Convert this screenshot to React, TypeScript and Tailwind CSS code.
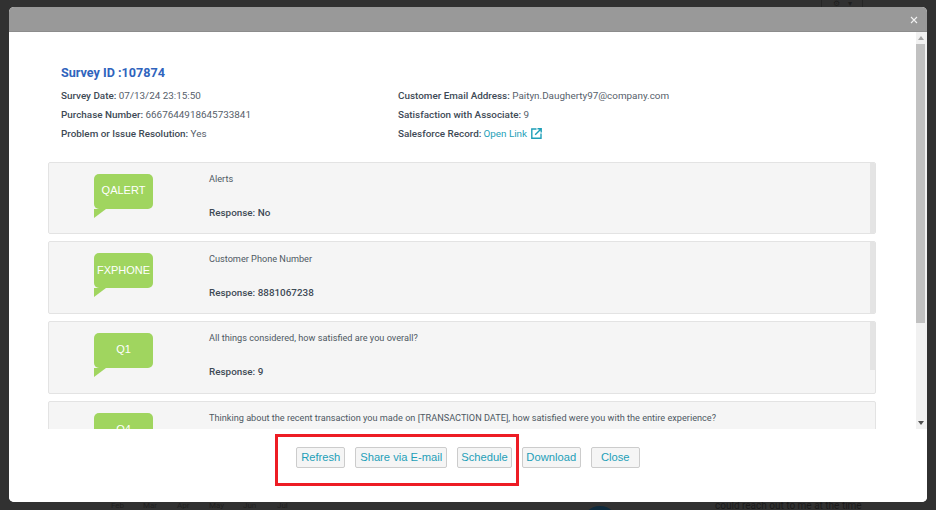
import React from 'react';

const questions = [
    { code: 'QALERT', text: 'Alerts', response: 'No', bar: 'h-full' },
    { code: 'FXPHONE', text: 'Customer Phone Number', response: '8881067238', bar: 'h-full' },
    { code: 'Q1', text: 'All things considered, how satisfied are you overall?', response: '9', bar: 'h-[48px]' },
    {
        code: 'Q4',
        text: 'Thinking about the recent transaction you made on [TRANSACTION DATE], how satisfied were you with the entire experience?',
        response: '10',
        bar: 'h-0',
    },
];

const buttons = [
    { label: 'Refresh', width: 'w-[49px]' },
    { label: 'Share via E-mail', width: 'w-[92px]' },
    { label: 'Schedule', width: 'w-[54.5px]' },
    { label: 'Download', width: 'w-[59px]' },
    { label: 'Close', width: 'w-[49px]' },
];

const months = [
    { name: 'Feb', left: 'left-[111px]' },
    { name: 'Mar', left: 'left-[143px]' },
    { name: 'Apr', left: 'left-[177px]' },
    { name: 'May', left: 'left-[209px]' },
    { name: 'Jun', left: 'left-[243px]' },
    { name: 'Jul', left: 'left-[277px]' },
];

const Bubble: React.FC<{ code: string }> = ({ code }) => (
    <div className="relative w-[59px] h-[35px] shrink-0 ml-[45px] rounded-[5px] bg-[#a0d55f] flex justify-center pt-[9.5px] text-[11px] leading-[14px] font-normal text-white font-['Liberation_Sans',sans-serif]">
        {code}
        <svg className="absolute left-0 top-[35px]" width="12" height="10" viewBox="0 0 12 10">
            <path d="M0 0H12L0 9Z" fill="#a0d55f" />
        </svg>
    </div>
);

const Meta: React.FC<{ label: string; children: React.ReactNode }> = ({ label, children }) => (
    <p className="h-[19px] leading-[19px] whitespace-nowrap">
        <span className="font-medium text-[#3e4a56]">{label}</span> <span className="text-[#56606a]">{children}</span>
    </p>
);

export default function App() {
    return (
        <div className="relative h-[510px] w-[936px] overflow-hidden bg-[#313131] font-['Roboto',sans-serif] pt-[7px] pl-[9px]">
            {/* page behind the overlay, only its edges show */}
            <div className="absolute left-[821px] top-0 w-[42px] h-[7px] border-x border-[#262626] flex justify-center gap-[8px] text-[8px] leading-[7px] text-[#1f1f1f]">
                <span>⚙</span>
                <span>▾</span>
            </div>
            {months.map((m) => (
                <span key={m.name} className={`absolute top-[502px] text-[8px] leading-[8px] text-[#1f1f1f] ${m.left}`}>
                    {m.name}
                </span>
            ))}
            <div className="absolute left-[582px] top-[506px] w-[36px] h-[36px] rounded-full bg-[#0f2a3c]" />
            <span className="absolute left-[715px] top-[500px] text-[10px] leading-[12px] whitespace-nowrap text-[#1a1a1a]">
                could reach out to me at the time
            </span>

            <div className="relative w-[918px] h-[495px] rounded-[5px] overflow-hidden bg-white flex flex-col">
                <div className="h-[25px] shrink-0 bg-[#999999] border-b border-[#8c8c8c] flex justify-end items-center pr-[9px]">
                    <svg width="8" height="8" viewBox="0 0 8 8" className="mt-[2px]">
                        <path d="M1 1L7 7M7 1L1 7" stroke="#f2f2f2" strokeWidth="1.1" />
                    </svg>
                </div>

                <div className="h-[397px] shrink-0 flex overflow-hidden">
                    <div className="w-[907px] shrink-0 overflow-hidden pl-[39px] pr-[40px]">
                        <h2 className="ml-[13px] mt-[33px] text-[12.6px] leading-[16px] font-bold text-[#2f64bd]">Survey ID :107874</h2>
                        <div className="ml-[13px] mt-[5px] grid grid-cols-[337px_1fr] text-[9.9px]">
                            <div>
                                <Meta label="Survey Date:">07/13/24 23:15:50</Meta>
                                <Meta label="Purchase Number:">6667644918645733841</Meta>
                                <Meta label="Problem or Issue Resolution:">Yes</Meta>
                            </div>
                            <div>
                                <Meta label="Customer Email Address:">Paityn.Daugherty97@company.com</Meta>
                                <Meta label="Satisfaction with Associate:">9</Meta>
                                <p className="h-[19px] leading-[19px] flex items-center whitespace-nowrap">
                                    <span className="font-medium text-[#3e4a56]">Salesforce Record:</span>
                                    <span className="ml-[2px] text-[#1e9fb8]">Open Link</span>
                                    <svg className="ml-[4px]" width="11" height="11" viewBox="0 0 11 11" fill="none" stroke="#1e9fb8" strokeWidth="1.4">
                                        <path d="M5.5 1H0.8V10.2H10V5.5" />
                                        <path d="M4.2 6.8L10 1M6.5 0.8H10.2V4.5" />
                                    </svg>
                                </p>
                            </div>
                        </div>

                        <div className="mt-[18.8px] flex flex-col gap-[7px]">
                            {questions.map((q) => (
                                <div
                                    key={q.code}
                                    className="relative h-[72.6px] shrink-0 rounded-[2px] border border-[#e3e3e3] bg-[#f5f5f5] flex pt-[11px] overflow-hidden"
                                >
                                    <Bubble code={q.code} />
                                    <div className="ml-[56px] mt-[0.4px] text-[9.17px] leading-[12px] text-[#4f5963]">
                                        <p className="-mt-[5px] pt-[4px]">{q.text}</p>
                                        <p className="mt-[21px] text-[9.9px] leading-[14px] font-medium text-[#3e4a56]">Response: {q.response}</p>
                                    </div>
                                    <div className={`absolute right-0 top-0 w-[5px] bg-[#e4e4e4] ${q.bar}`} />
                                </div>
                            ))}
                        </div>
                    </div>

                    <div className="w-[11px] shrink-0 flex flex-col bg-[#f1f1f1]">
                        <div className="h-[12px] w-[9px] flex items-center justify-center">
                            <svg width="6" height="4" viewBox="0 0 6 4"><path d="M3 0L6 4H0Z" fill="#a3a3a3" /></svg>
                        </div>
                        <div className="h-[279px] w-[9px] bg-[#c1c1c1]" />
                        <div className="flex-1" />
                        <div className="h-[12px] w-[9px] flex items-center justify-center">
                            <svg width="6" height="4" viewBox="0 0 6 4"><path d="M3 4L6 0H0Z" fill="#505050" /></svg>
                        </div>
                    </div>
                </div>

                <div className="flex-1 bg-white flex justify-center gap-[10px] pt-[18px]">
                    {buttons.map((b) => (
                        <button
                            key={b.label}
                            className={`h-[21px] rounded-[2px] border border-[#cccccc] bg-[#f5f5f5] text-[11.2px] leading-[19px] whitespace-nowrap text-[#1e9fb8] font-['Liberation_Sans',sans-serif] ${b.width}`}
                        >
                            {b.label}
                        </button>
                    ))}
                </div>
            </div>
            {/* red highlight drawn over the buttons */}
            <div className="absolute left-[275px] top-[434px] w-[244px] h-[52px] border-[3px] border-[#ed1c24]" />
        </div>
    );
}
